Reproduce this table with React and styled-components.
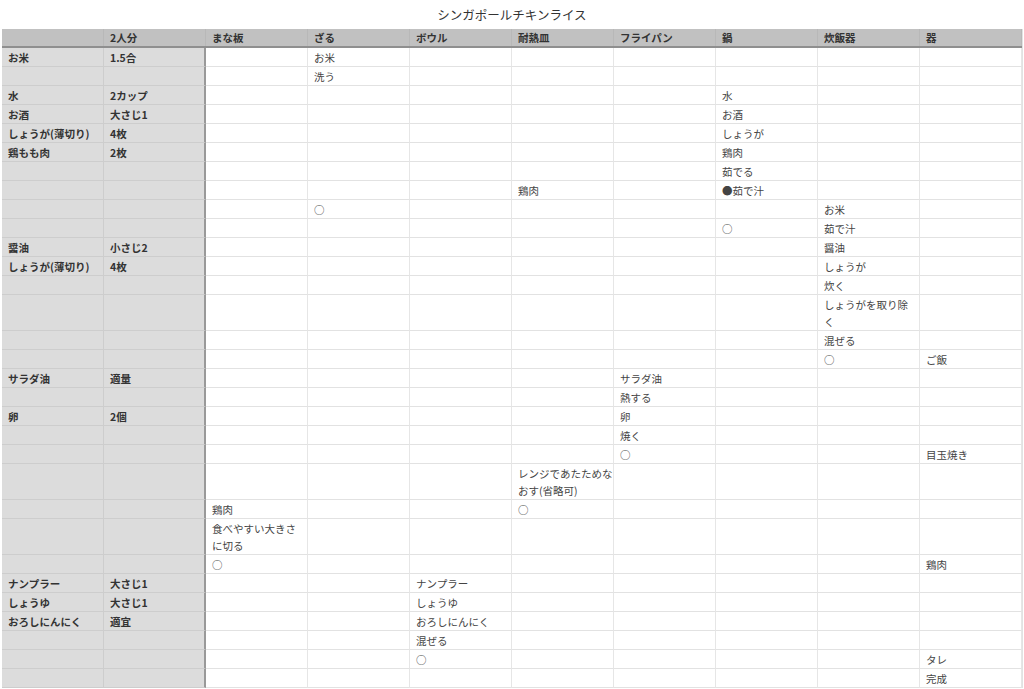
import styled, { createGlobalStyle } from "styled-components";

const GlobalStyle = createGlobalStyle`
  html, body {
    margin: 0;
    padding: 0;
    background: #ffffff;
  }
  body {
    font-family: "Noto Sans CJK JP", "Noto Sans", sans-serif;
  }
`;

const columns = ["", "2人分", "まな板", "ざる", "ボウル", "耐熱皿", "フライパン", "鍋", "炊飯器", "器"];

// [材料, 分量, { 列番号: 内容 }]
const rows = [
  ["お米", "1.5合", { 3: "お米" }],
  ["", "", { 3: "洗う" }],
  ["水", "2カップ", { 7: "水" }],
  ["お酒", "大さじ1", { 7: "お酒" }],
  ["しょうが(薄切り)", "4枚", { 7: "しょうが" }],
  ["鶏もも肉", "2枚", { 7: "鶏肉" }],
  ["", "", { 7: "茹でる" }],
  ["", "", { 5: "鶏肉", 7: "●茹で汁" }],
  ["", "", { 3: "○", 8: "お米" }],
  ["", "", { 7: "○", 8: "茹で汁" }],
  ["醤油", "小さじ2", { 8: "醤油" }],
  ["しょうが(薄切り)", "4枚", { 8: "しょうが" }],
  ["", "", { 8: "炊く" }],
  ["", "", { 8: "しょうがを取り除\nく" }],
  ["", "", { 8: "混ぜる" }],
  ["", "", { 8: "○", 9: "ご飯" }],
  ["サラダ油", "適量", { 6: "サラダ油" }],
  ["", "", { 6: "熱する" }],
  ["卵", "2個", { 6: "卵" }],
  ["", "", { 6: "焼く" }],
  ["", "", { 6: "○", 9: "目玉焼き" }],
  ["", "", { 5: "レンジであたためな\nおす(省略可)" }],
  ["", "", { 2: "鶏肉", 5: "○" }],
  ["", "", { 2: "食べやすい大きさ\nに切る" }],
  ["", "", { 2: "○", 9: "鶏肉" }],
  ["ナンプラー", "大さじ1", { 4: "ナンプラー" }],
  ["しょうゆ", "大さじ1", { 4: "しょうゆ" }],
  ["おろしにんにく", "適宜", { 4: "おろしにんにく" }],
  ["", "", { 4: "混ぜる" }],
  ["", "", { 4: "○", 9: "タレ" }],
  ["", "", { 9: "完成" }],
];

export default function App() {
  return (
    <>
      <GlobalStyle />
      <Page>
        <Title>シンガポールチキンライス</Title>
        <Sheet>
          <HeaderRow>
            {columns.map((c, i) => (
              <HeaderCell key={i} $divider={i === 1}>{c}</HeaderCell>
            ))}
          </HeaderRow>
          {rows.map(([name, amount, steps], r) => (
            <Row key={r}>
              <LabelCell>{name}</LabelCell>
              <LabelCell $divider>{amount}</LabelCell>
              {columns.slice(2).map((_, j) => (
                <Cell key={j}>{steps[j + 2] || ""}</Cell>
              ))}
            </Row>
          ))}
        </Sheet>
      </Page>
    </>
  );
}

const Page = styled.div`
  width: 1024px;
  padding: 0 2px;
  box-sizing: border-box;
`;

const Title = styled.div`
  height: 29px;
  display: flex;
  align-items: center;
  justify-content: center;
  font-size: 12.5px;
  color: #333;
  padding-bottom: 1px;
  box-sizing: border-box;
`;

const Sheet = styled.div`
  display: flex;
  flex-direction: column;
  width: 1020px;
  border-right: 1px solid #e2e2e2;
  box-sizing: content-box;
`;

const HeaderRow = styled.div`
  display: grid;
  grid-template-columns: repeat(10, 102px);
  background: #c1c1c1;
  border-bottom: 2px solid #8f8f8f;
`;

const HeaderCell = styled.div`
  height: 17px;
  line-height: 17px;
  padding-left: 6px;
  font-size: 10.5px;
  font-weight: bold;
  color: #333;
  border-right: 1px solid #b8b8b8;
  white-space: nowrap;
`;

const Row = styled.div`
  display: grid;
  grid-template-columns: repeat(10, 102px);
`;

const Cell = styled.div`
  box-sizing: border-box;
  padding: 1px 5px 0 6px;
  line-height: 17px;
  min-height: 19px;
  font-size: 10.5px;
  color: #444;
  border-right: 1px solid #e6e6e6;
  border-bottom: 1px solid #e2e2e2;
  white-space: pre;
  overflow: hidden;
`;

const LabelCell = styled(Cell)`
  background: #dcdcdc;
  font-weight: bold;
  color: #333;
  border-bottom-color: #cdcdcd;
  border-right: ${(p) => (p.$divider ? "2px solid #999999" : "1px solid #cdcdcd")};
`;
